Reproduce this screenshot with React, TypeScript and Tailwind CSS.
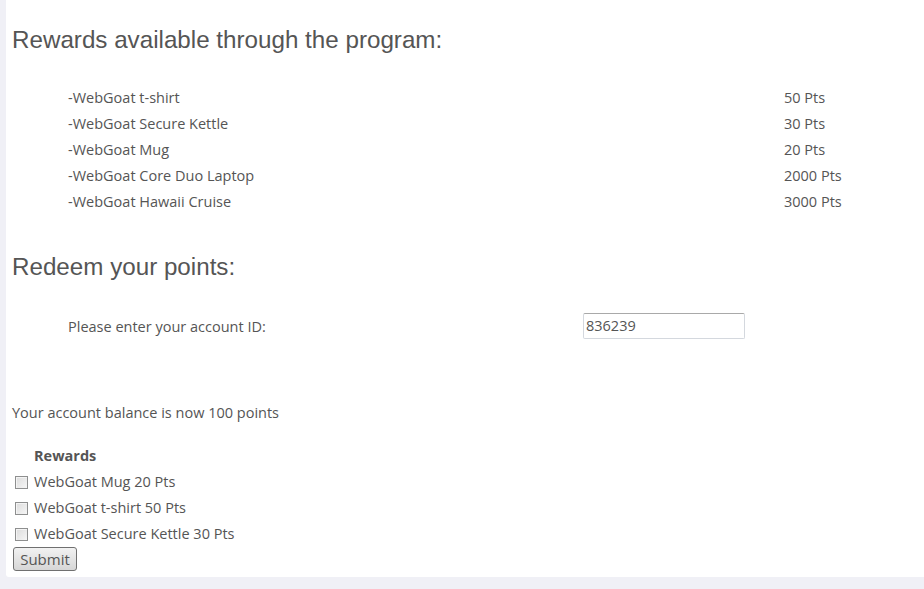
const rewards = [
  { name: '-WebGoat t-shirt', pts: '50 Pts' },
  { name: '-WebGoat Secure Kettle', pts: '30 Pts' },
  { name: '-WebGoat Mug', pts: '20 Pts' },
  { name: '-WebGoat Core Duo Laptop', pts: '2000 Pts' },
  { name: '-WebGoat Hawaii Cruise', pts: '3000 Pts' },
]

const choices = ['WebGoat Mug 20 Pts', 'WebGoat t-shirt 50 Pts', 'WebGoat Secure Kettle 30 Pts']

function Box() {
  return (
    <span className="inline-block w-[13px] h-[13px] border border-[#8e8f8f] bg-gradient-to-br from-[#dcdcdc] to-[#f6f6f6] shadow-[inset_1px_1px_0_#f4f4f4]" />
  )
}

export default function App() {
  const body = { fontFamily: '"Open Sans", "Liberation Sans", sans-serif' }
  const head = { fontFamily: '"Liberation Sans", Arial, sans-serif' }
  return (
    <div className="min-h-[589px] bg-[#f0f0f6] pl-[6px]" style={body}>
      <div className="bg-white rounded-bl-[3px] px-[6px] pt-[26px] pb-[6px] text-[14.5px] text-[#555]">
        <h2 className="text-[24.2px] leading-[28px] text-[#555]" style={head}>
          Rewards available through the program:
        </h2>

        <div className="mt-[30px] ml-[56px]">
          {rewards.map((r) => (
            <div key={r.name} className="flex h-[26px] items-center pt-[1px]">
              <span className="w-[716px]">{r.name}</span>
              <span>{r.pts}</span>
            </div>
          ))}
        </div>

        <h2 className="mt-[39px] text-[24.2px] leading-[28px] text-[#555]" style={head}>
          Redeem your points:
        </h2>

        <div className="mt-[32px] ml-[56px] flex h-[26px] items-center">
          <span className="w-[515px] pt-[1px]">Please enter your account ID:</span>
          <div className="w-[162px] h-[26px] border border-[#d4d8de] border-t-[#a9a9a9] rounded-[2px] flex items-center px-[2px] text-[#555]">
            836239
          </div>
        </div>

        <p className="mt-[63px] leading-[20px] pt-[1px]">Your account balance is now 100 points</p>

        <div className="mt-[19px]">
          <div className="h-[26px] flex items-center pl-[22px] pt-[1px] font-bold">Rewards</div>
          {choices.map((c) => (
            <div key={c} className="h-[26px] flex items-center">
              <span className="ml-[3px] mr-[6px] mt-[2px] flex"><Box /></span>
              <span className="pt-[1px]">{c}</span>
            </div>
          ))}
          <button className="ml-[1px] mt-[1px] h-[24px] w-[64px] rounded-[3px] border border-[#707070] bg-gradient-to-b from-[#f2f2f2] to-[#d6d6d6] text-[15px] leading-none text-[#555]">
            Submit
          </button>
        </div>
      </div>
    </div>
  )
}
